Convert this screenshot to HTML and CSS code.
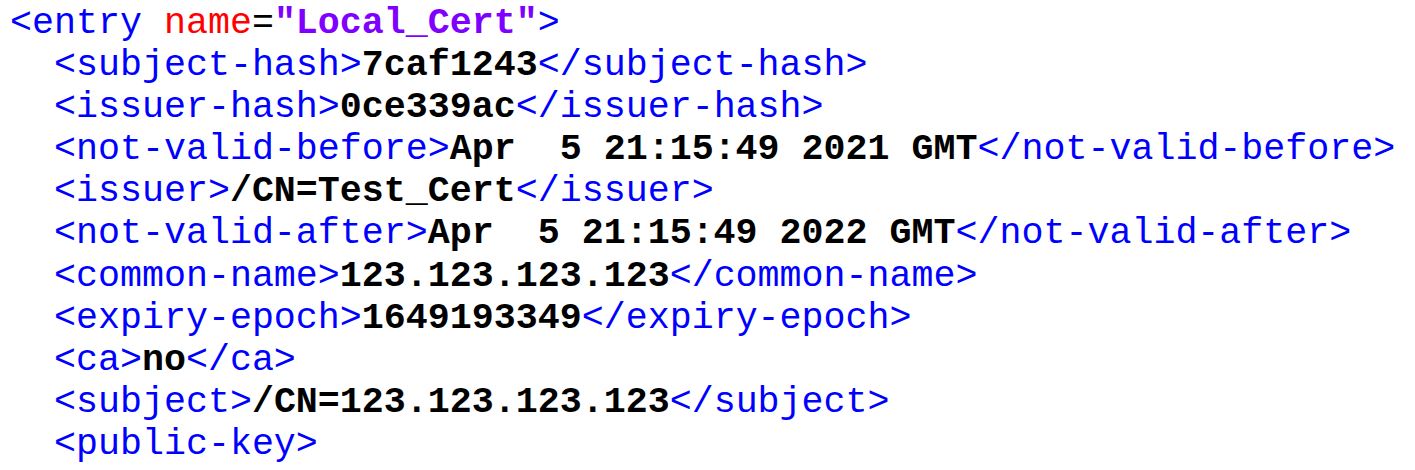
FILE: index.html
```html
<!DOCTYPE html>
<html>
<head>
<meta charset="utf-8">
<link rel="stylesheet" href="styles.css">
</head>
<body>
<pre class="xml"><span class="tag">&lt;entry </span><span class="attr">name</span><span class="eq">=</span><span class="val">"Local_Cert"</span><span class="tag">&gt;</span>
  <span class="tag">&lt;subject-hash&gt;</span><b class="txt">7caf1243</b><span class="tag">&lt;/subject-hash&gt;</span>
  <span class="tag">&lt;issuer-hash&gt;</span><b class="txt">0ce339ac</b><span class="tag">&lt;/issuer-hash&gt;</span>
  <span class="tag">&lt;not-valid-before&gt;</span><b class="txt">Apr  5 21:15:49 2021 GMT</b><span class="tag">&lt;/not-valid-before&gt;</span>
  <span class="tag">&lt;issuer&gt;</span><b class="txt">/CN=Test_Cert</b><span class="tag">&lt;/issuer&gt;</span>
  <span class="tag">&lt;not-valid-after&gt;</span><b class="txt">Apr  5 21:15:49 2022 GMT</b><span class="tag">&lt;/not-valid-after&gt;</span>
  <span class="tag">&lt;common-name&gt;</span><b class="txt">123.123.123.123</b><span class="tag">&lt;/common-name&gt;</span>
  <span class="tag">&lt;expiry-epoch&gt;</span><b class="txt">1649193349</b><span class="tag">&lt;/expiry-epoch&gt;</span>
  <span class="tag">&lt;ca&gt;</span><b class="txt">no</b><span class="tag">&lt;/ca&gt;</span>
  <span class="tag">&lt;subject&gt;</span><b class="txt">/CN=123.123.123.123</b><span class="tag">&lt;/subject&gt;</span>
  <span class="tag">&lt;public-key&gt;</span></pre>
</body>
</html>
```
FILE: styles.css
```css
html, body {
  margin: 0;
  padding: 0;
  background: #ffffff;
}
.xml {
  margin: 0;
  padding: 2px 0 0 10px;
  font-family: "Courier New", "Nimbus Mono PS", "FreeMono", "Liberation Mono", monospace;
  font-size: 36.65px;
  line-height: 42.1px;
  color: #000000;
  white-space: pre;
}
.tag { color: #0000ff; }
.attr { color: #ff0000; }
.eq { color: #000000; }
.val { color: #8000ff; font-weight: bold; }
.txt { color: #000000; font-weight: bold; }
```
